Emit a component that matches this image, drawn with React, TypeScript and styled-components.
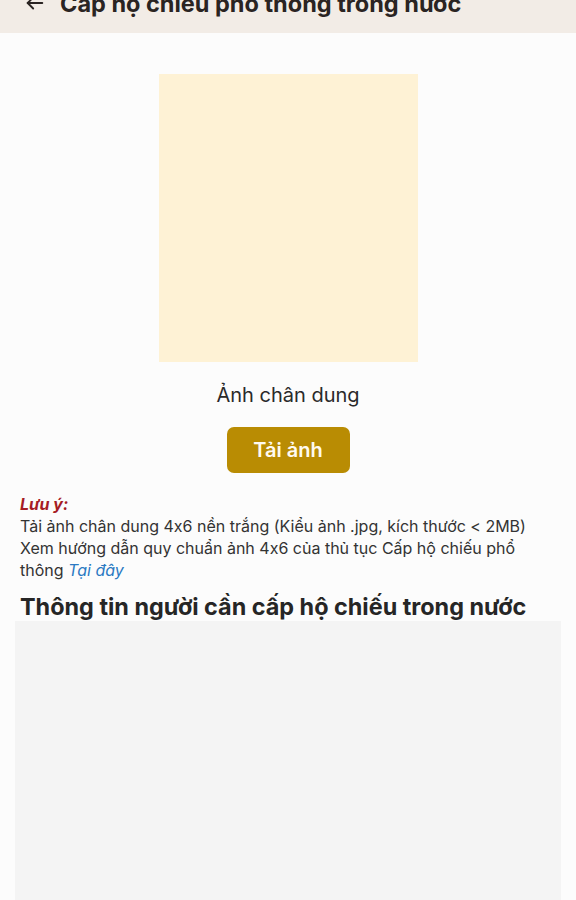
import styled, { createGlobalStyle } from "styled-components";

const GlobalStyle = createGlobalStyle`
  html, body {
    margin: 0;
    padding: 0;
    background: #fcfcfc;
    font-family: Inter, "Noto Sans", sans-serif;
    font-feature-settings: "calt" 0;
    color: #262626;
  }
  body {
    overflow: hidden;
  }
`;

const Page = styled.div`
  width: 576px;
  height: 900px;
  display: flex;
  flex-direction: column;
  overflow: hidden;
  background: #fcfcfc;
`;

// top bar, page already scrolled a little
const TopBar = styled.div`
  height: 60px;
  margin-top: -27px;
  background: #f2ece6;
  display: flex;
  align-items: center;
  padding-left: 24px;
  gap: 14px;
  flex-shrink: 0;
`;

const BackIcon = styled.svg`
  width: 22px;
  height: 22px;
  flex-shrink: 0;
`;

const BarTitle = styled.h1`
  margin: 0;
  font-size: 23.5px;
  font-weight: 700;
  color: #2a2422;
  white-space: nowrap;
`;

const PhotoSection = styled.div`
  display: flex;
  flex-direction: column;
  align-items: center;
  padding-top: 41px;
`;

const PhotoFrame = styled.div`
  width: 259px;
  height: 288px;
  background: #fef2d5;
`;

const PhotoLabel = styled.div`
  margin-top: 20px;
  font-size: 20px;
  line-height: 26px;
  color: #2a2a2a;
`;

const UploadButton = styled.button`
  margin-top: 19px;
  width: 123px;
  height: 46px;
  border: none;
  border-radius: 7px;
  background: #b98c03;
  color: #fffaf0;
  font-family: inherit;
  font-size: 20px;
  font-weight: 600;
`;

const Note = styled.div`
  padding: 20px 20px 0;
  font-size: 16px;
  line-height: 22px;
  color: #333;
`;

const NoteTitle = styled.div`
  color: #a61c25;
  font-weight: 700;
  font-style: italic;
`;

const Link = styled.a`
  color: #2a79c2;
  font-style: italic;
  text-decoration: none;
`;

const SectionTitle = styled.h2`
  margin: 12px 0 0;
  padding: 0 20px;
  font-size: 23.4px;
  line-height: 28px;
  font-weight: 700;
  color: #262626;
  white-space: nowrap;
`;

const FormBox = styled.div`
  margin: 0 15px;
  flex: 1;
  background: #f4f4f4;
`;

export default function App() {
  return (
    <Page>
      <GlobalStyle />
      <TopBar>
        <BackIcon viewBox="0 0 24 24" fill="none" stroke="#2a2422" strokeWidth="2" strokeLinecap="round" strokeLinejoin="round">
          <path d="M20 12H4" />
          <path d="M10 6l-6 6 6 6" />
        </BackIcon>
        <BarTitle>Cấp hộ chiếu phổ thông trong nước</BarTitle>
      </TopBar>

      <PhotoSection>
        <PhotoFrame />
        <PhotoLabel>Ảnh chân dung</PhotoLabel>
        <UploadButton>Tải ảnh</UploadButton>
      </PhotoSection>

      <Note>
        <NoteTitle>Lưu ý:</NoteTitle>
        <div>Tải ảnh chân dung 4x6 nền trắng (Kiểu ảnh .jpg, kích thước &lt; 2MB)</div>
        <div>
          Xem hướng dẫn quy chuẩn ảnh 4x6 của thủ tục Cấp hộ chiếu phổ thông <Link>Tại đây</Link>
        </div>
      </Note>

      <SectionTitle>Thông tin người cần cấp hộ chiếu trong nước</SectionTitle>
      <FormBox />
    </Page>
  );
}
